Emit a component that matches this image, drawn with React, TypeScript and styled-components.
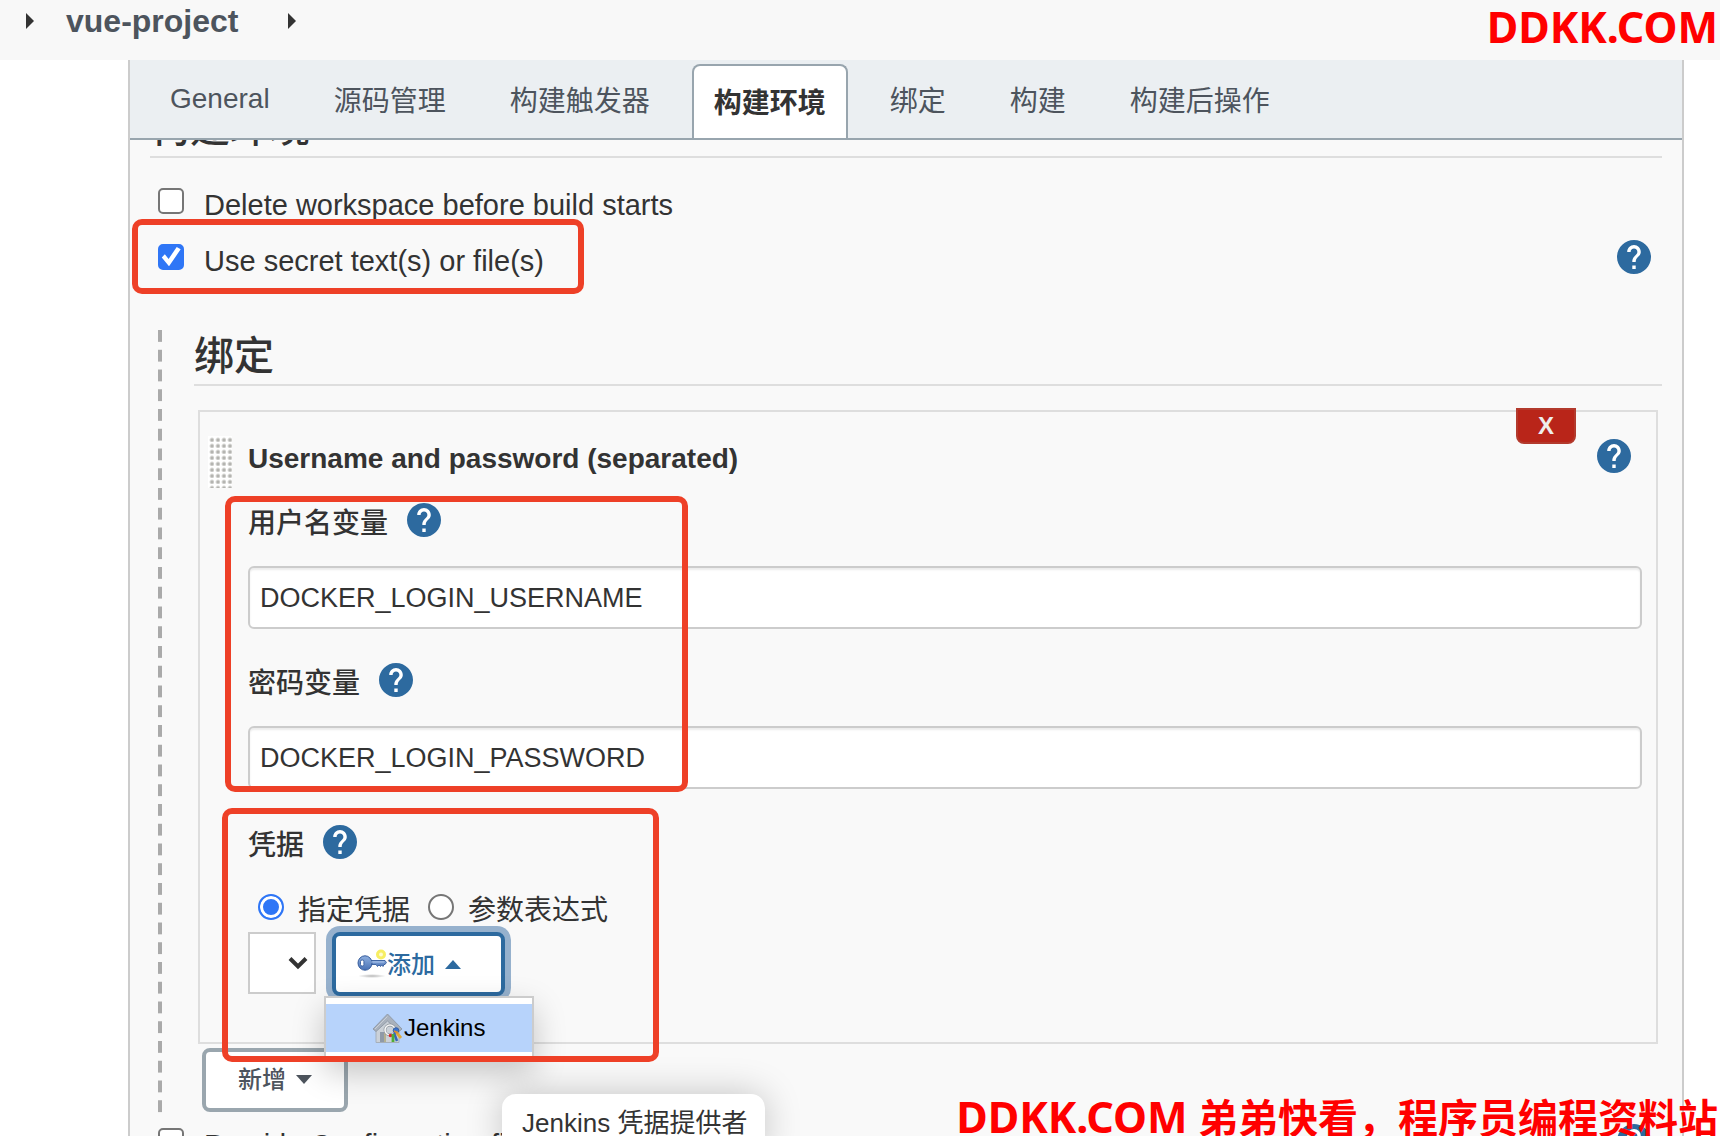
import React from "react";
import styled, { createGlobalStyle, css } from "styled-components";

const GlobalStyle = createGlobalStyle`
  *, *::before, *::after { box-sizing: border-box; }
  body {
    margin: 0;
    background: #fff;
    color: #333;
    font-family: "Liberation Sans", "Noto Sans CJK SC", sans-serif;
    font-size: 28px;
  }
  button, input, select { font-family: inherit; color: inherit; }
`;

const Page = styled.div`
  position: relative;
  height: 100vh;
  overflow: hidden;
`;

const Breadcrumbs = styled.nav`
  display: flex;
  align-items: center;
  height: 60px;
  padding: 0 26px 18px;
  background: #f8f8f8;
`;

const Crumb = styled.a`
  margin: 0 50px 0 32px;
  color: #4d545d;
  font-size: 32px;
  font-weight: 700;
  text-decoration: none;
`;

const Panel = styled.main`
  margin: 0 36px 0 128px;
  border: solid #ccc;
  border-width: 0 2px;
  background: #f9f9f9;
`;

const TabBar = styled.div`
  position: relative;
  z-index: 1;
  display: flex;
  gap: 20px;
  height: 80px;
  padding: 4px 18px 0;
  border-bottom: 2px solid #98a5ae;
  background: #ebeff2;
`;

const Tab = styled.button<{ $active?: boolean }>`
  padding: 0 20px 6px;
  border: 2px solid transparent;
  border-bottom: 0;
  border-radius: 8px 8px 0 0;
  background: none;
  color: #4d545d;
  font-size: 28px;
  white-space: nowrap;
  ${(p) =>
    p.$active &&
    css`
      padding-bottom: 2px;
      border-color: #98a5ae;
      background: #fff;
      color: #333;
      font-weight: 700;
    `}
`;

const Content = styled.form`
  padding: 0 20px;
`;

const SectionTitle = styled.h2<{ $tucked?: boolean }>`
  height: 60px;
  margin: ${(p) => (p.$tucked ? "-42px 0 15px" : "0")};
  padding: 6px 0 4px;
  border-bottom: 2px solid #dedede;
  font-size: 40px;
  font-weight: 500;
  line-height: 48px;
`;

const OptionRow = styled.div`
  position: relative;
  display: flex;
  align-items: center;
  justify-content: space-between;
  height: 56px;
  padding: 0 11px 0 8px;
`;

const Option = styled.label`
  display: flex;
  align-items: center;
  gap: 20px;
  font-size: 29px;
`;

const OptionText = styled.span`
  padding-top: 8px;
`;

const Tick = styled.input`
  flex: none;
  width: 26px;
  height: 26px;
  margin: 0;
  border: 2px solid #767676;
  border-radius: 5px;
  background: #fff;
  appearance: none;

  &:checked {
    border-color: #2f76f6;
    background: #2f76f6;
  }

  &:checked::after {
    content: "";
    display: block;
    height: 22px;
    background: #fff;
    clip-path: polygon(8% 52%, 22% 38%, 39% 59%, 76% 5%, 94% 15%, 41% 92%);
  }
`;

const Radio = styled.input`
  flex: none;
  width: 26px;
  height: 26px;
  margin: 0;
  border: 2px solid #767676;
  border-radius: 50%;
  background: #fff;
  appearance: none;

  &:checked {
    border-color: #2f76f6;
    background: #2f76f6;
    box-shadow: inset 0 0 0 3px #fff;
  }
`;

const HelpButton = styled.button`
  display: block;
  flex: none;
  width: 34px;
  height: 34px;
  padding: 0;
  border: 0;
  border-radius: 50%;
  background: none;
`;

const Nested = styled.section`
  position: relative;
  margin: 41px 0 1px 8px;
  padding-left: 36px;

  &::before {
    content: "";
    position: absolute;
    top: 4px;
    bottom: -8px;
    left: 0;
    width: 4px;
    background: linear-gradient(#aaa 60%, transparent 60%) 0 0 / 4px 20px round;
  }
`;

const Card = styled.div`
  position: relative;
  margin: 24px 4px 4px;
  padding: 24px 14px 46px 48px;
  border: 2px solid #dedede;
`;

const CardHeader = styled.div`
  display: flex;
  align-items: flex-start;
  gap: 16px;
  margin: 0 11px 15px -40px;
`;

const DragHandle = styled.div`
  width: 24px;
  height: 52px;
  background: #fff radial-gradient(circle at 4px 4px, #b4b4b0 1px, #dededc 2px, #fff 3px) 0 0 / 6px 6px;
`;

const CardTitle = styled.h3`
  flex: 1;
  margin: 0;
  font-size: 28px;
  font-weight: 700;
  line-height: 46px;
`;

const HelpSlot = styled.div`
  padding-top: 3px;
`;

const RemoveButton = styled.button`
  position: absolute;
  top: -4px;
  right: 80px;
  width: 60px;
  height: 36px;
  padding: 0;
  border: 2px solid #b33a2d;
  border-radius: 0 0 8px 8px;
  background: #b92519;
  color: #eee;
  font-size: 24px;
  font-weight: 700;
  line-height: 32px;
`;

const Group = styled.div`
  position: relative;
`;

const LabelRow = styled.div`
  display: flex;
  align-items: center;
  gap: 19px;
`;

const FieldLabel = styled.label`
  padding-top: 8px;
  font-weight: 500;
  line-height: 26px;
`;

const Field = styled.div`
  padding-bottom: 34px;
`;

const TextBox = styled.input`
  display: block;
  width: 100%;
  height: 63px;
  margin-top: 29px;
  padding: 2px 10px 0;
  border: 2px solid #ccc;
  border-radius: 6px;
  background: #fff;
  box-shadow: inset 0 2px 2px rgba(0, 0, 0, 0.08);
  font-size: 27px;
`;

const CredentialLabelRow = styled(LabelRow)`
  padding-top: 2px;
`;

const RadioRow = styled.div`
  display: flex;
  align-items: center;
  gap: 18px;
  height: 32px;
  margin: 32px 0 9px;
  padding-left: 10px;
`;

const RadioOption = styled.label`
  display: flex;
  align-items: center;
  gap: 14px;
  line-height: 28px;
`;

const Controls = styled.div`
  display: flex;
  align-items: flex-start;
  gap: 16px;
`;

const SelectBox = styled.div`
  position: relative;
  width: 68px;
  height: 62px;

  select {
    width: 100%;
    height: 100%;
    border: 2px solid #ccc;
    border-radius: 0;
    background: #fff;
    appearance: none;
  }

  svg {
    position: absolute;
    top: 24px;
    right: 8px;
    pointer-events: none;
  }
`;

const MenuAnchor = styled.div`
  position: relative;
`;

const MenuButton = styled.button<{ $open?: boolean }>`
  display: flex;
  align-items: center;
  gap: 10px;
  height: 64px;
  padding: ${(p) => (p.$open ? "0 40px 0 21px" : "0 32px 2px")};
  border: 4px solid ${(p) => (p.$open ? "#2d6a9f" : "#9aa6ae")};
  border-radius: 8px;
  background: #fff;
  box-shadow: ${(p) => (p.$open ? "0 0 0 6px #96b1cd" : "none")};
  color: ${(p) => (p.$open ? "#2d6a9f" : "#4d545d")};
  font-size: 24px;
  font-weight: 500;
`;

const AddButton = styled(MenuButton)`
  margin-left: 8px;
`;

const IconText = styled.span`
  display: flex;
  align-items: center;
`;

const ButtonText = styled.span`
  padding-bottom: 4px;
`;

const Menu = styled.div`
  position: absolute;
  z-index: 2;
  top: 64px;
  left: -8px;
  width: 210px;
  padding: 6px 0;
  border: 2px solid #ccc;
  background: #fff;
  box-shadow: 0 12px 32px rgba(0, 0, 0, 0.22);
`;

const MenuItem = styled.button`
  display: flex;
  align-items: center;
  gap: 1px;
  width: 100%;
  height: 48px;
  padding: 0 0 0 46px;
  border: 0;
  background: #b7d3fb;
  color: #000;
  font-size: 24px;
`;

const Tooltip = styled.div`
  position: absolute;
  z-index: 2;
  top: 162px;
  left: 170px;
  padding: 13px 18px 13px 20px;
  border-radius: 14px;
  background: #fff;
  box-shadow: 0 0 36px rgba(0, 0, 0, 0.22);
  font-size: 26px;
  line-height: 32px;
  white-space: nowrap;
`;

const Highlight = styled.div<{ $top: number; $left: number; $width: number; $height: number }>`
  position: absolute;
  z-index: 3;
  top: ${(p) => p.$top}px;
  left: ${(p) => p.$left}px;
  width: ${(p) => p.$width}px;
  height: ${(p) => p.$height}px;
  border: 6px solid #ee4027;
  border-radius: 10px;
  pointer-events: none;
`;

const Watermark = styled.div<{ $bottom?: boolean }>`
  position: absolute;
  z-index: 4;
  right: 2px;
  ${(p) => (p.$bottom ? "bottom: -10px;" : "top: -1px;")}
  color: #f00;
  font-family: "Noto Sans", "Noto Sans CJK SC", sans-serif;
  font-size: 40px;
  font-weight: 700;
  line-height: 56px;
  white-space: nowrap;
`;

const Brand = styled.span`
  font-size: 43px;
`;

const CrumbArrow = () => (
  <svg width="8" height="16" viewBox="0 0 8 16" aria-hidden="true">
    <path d="M0 0L8 8L0 16Z" fill="#333" />
  </svg>
);

const Help = ({ label }: { label: string }) => (
  <HelpButton type="button" aria-label={label}>
    <svg width="34" height="34" viewBox="2 2 20 20" aria-hidden="true">
      <circle cx="12" cy="12" r="9" fill="#fff" />
      <path
        fill="#2d6a9f"
        d="M12 2C6.48 2 2 6.48 2 12s4.48 10 10 10 10-4.48 10-10S17.52 2 12 2zm1 17h-2v-2h2v2zm2.07-7.75l-.9.92C13.45 12.9 13 13.5 13 15h-2v-.5c0-1.1.45-2.1 1.17-2.83l1.24-1.26c.37-.36.59-.86.59-1.41 0-1.1-.9-2-2-2s-2 .9-2 2H8c0-2.21 1.79-4 4-4s4 1.79 4 4c0 .88-.36 1.68-.93 2.25z"
      />
    </svg>
  </HelpButton>
);

const Caret = ({ up }: { up?: boolean }) => (
  <svg width="16" height="9" viewBox="0 0 16 9" aria-hidden="true">
    <path d={up ? "M0 9L8 0L16 9Z" : "M0 0L16 0L8 9Z"} fill="currentColor" />
  </svg>
);

const KeyIcon = () => (
  <svg width="30" height="30" viewBox="0 0 30 30" aria-hidden="true">
    <defs>
      <linearGradient id="keyMetal" x1="0" y1="0" x2="0" y2="1">
        <stop offset="0" stopColor="#8fb0e0" />
        <stop offset="1" stopColor="#4770b4" />
      </linearGradient>
      <radialGradient id="keyShadow">
        <stop offset="0" stopColor="#000" stopOpacity=".28" />
        <stop offset="1" stopColor="#000" stopOpacity="0" />
      </radialGradient>
    </defs>
    <ellipse cx="15" cy="27" rx="14" ry="2" fill="url(#keyShadow)" />
    <circle cx="24" cy="5.500" r="3.500" fill="#fffbd0" stroke="#f7ee62" strokeWidth="3" />
    <path
      d="M13 11.500H28L29.400 13.500L28 15.500H27L26 17.500L24.600 16L23.500 17.500L22 16L20.500 17.500L19 15.500H13Z"
      fill="url(#keyMetal)"
      stroke="#345b9c"
      strokeWidth=".9"
    />
    <ellipse cx="8" cy="14" rx="7" ry="7.200" fill="url(#keyMetal)" stroke="#345b9c" />
    <rect x="3.500" y="11" width="3.400" height="6" rx="1.500" fill="#fff" stroke="#345b9c" strokeWidth=".9" />
    <path d="M14 13H27" stroke="#b4cbee" strokeWidth=".8" />
  </svg>
);

const HouseIcon = () => (
  <svg width="31" height="31" viewBox="0 0 31 31" aria-hidden="true">
    <path d="M4 15L15 4L27 15V29.500H4Z" fill="#cbd1d8" stroke="#a6afb9" />
    <path d="M8 19H14V29H8Z" fill="#8f9aa8" />
    <path d="M13 20V29" stroke="#d9c87a" strokeWidth="1" />
    <path d="M1 16L15.500 1L30 16L27 18.500L15.500 8L4 18.500Z" fill="#a9b1bc" stroke="#8d97a4" strokeWidth=".9" />
    <path d="M3 16L15.500 3.500" stroke="#c9cfd7" strokeWidth="1" />
    <circle cx="18" cy="17" r="5" fill="none" stroke="#8e959d" strokeWidth="2.800" />
    <circle cx="18" cy="17" r="5" fill="none" stroke="#f4f5f6" strokeWidth="1.600" />
    <circle cx="18.500" cy="22.500" r="1.800" fill="#d92a2a" />
    <circle cx="24" cy="17.500" r="2.800" fill="#3f74c9" stroke="#28559f" strokeWidth=".8" />
    <path d="M24 19L29 25" stroke="#dda93a" strokeWidth="2.800" />
    <path d="M22 20L25 28" stroke="#3566ba" strokeWidth="2.600" />
    <path d="M21 21V29" stroke="#4fae35" strokeWidth="2.800" />
    <path d="M22 18L26 20" stroke="#e28b2b" strokeWidth="1.500" />
  </svg>
);

const tabs = ["General", "源码管理", "构建触发器", "构建环境", "绑定", "构建", "构建后操作"];

const CheckOption = ({ id, text, checked, help }: { id: string; text: string; checked?: boolean; help?: boolean }) => (
  <>
    <Option htmlFor={id}>
      <Tick id={id} type="checkbox" defaultChecked={checked} />
      <OptionText>{text}</OptionText>
    </Option>
    {help && <Help label={text} />}
  </>
);

const VariableField = ({ id, label, value }: { id: string; label: string; value: string }) => (
  <Field>
    <LabelRow>
      <FieldLabel htmlFor={id}>{label}</FieldLabel>
      <Help label={label} />
    </LabelRow>
    <TextBox id={id} type="text" defaultValue={value} />
  </Field>
);

export default function App() {
  return (
    <Page lang="zh-CN">
      <GlobalStyle />
      <Breadcrumbs>
        <CrumbArrow />
        <Crumb href="#project">vue-project</Crumb>
        <CrumbArrow />
      </Breadcrumbs>

      <Panel>
        <TabBar role="tablist">
          {tabs.map((name) => (
            <Tab key={name} type="button" role="tab" aria-selected={name === "构建环境"} $active={name === "构建环境"}>
              {name}
            </Tab>
          ))}
        </TabBar>

        <Content>
          <SectionTitle $tucked>构建环境</SectionTitle>
          <OptionRow>
            <CheckOption id="clean" text="Delete workspace before build starts" />
          </OptionRow>
          <OptionRow>
            <CheckOption id="secret" text="Use secret text(s) or file(s)" checked help />
            <Highlight $top={-10} $left={-18} $width={452} $height={75} />
          </OptionRow>

          <Nested>
            <SectionTitle>绑定</SectionTitle>
            <Card>
              <RemoveButton type="button">X</RemoveButton>
              <CardHeader>
                <DragHandle />
                <CardTitle>Username and password (separated)</CardTitle>
                <HelpSlot>
                  <Help label="Username and password" />
                </HelpSlot>
              </CardHeader>

              <Group>
                <VariableField id="username" label="用户名变量" value="DOCKER_LOGIN_USERNAME" />
                <VariableField id="password" label="密码变量" value="DOCKER_LOGIN_PASSWORD" />
                <Highlight $top={-7} $left={-23} $width={463} $height={296} />
              </Group>

              <Group>
                <CredentialLabelRow>
                  <FieldLabel htmlFor="credential">凭据</FieldLabel>
                  <Help label="凭据" />
                </CredentialLabelRow>
                <RadioRow>
                  <RadioOption>
                    <Radio type="radio" name="kind" defaultChecked />
                    <OptionText>指定凭据</OptionText>
                  </RadioOption>
                  <RadioOption>
                    <Radio type="radio" name="kind" />
                    <OptionText>参数表达式</OptionText>
                  </RadioOption>
                </RadioRow>
                <Controls>
                  <SelectBox>
                    <select id="credential">
                      <option value="" />
                    </select>
                    <svg width="20" height="14" viewBox="0 0 20 14" aria-hidden="true">
                      <path d="M2 2.500L10 10.500L18 2.500" fill="none" stroke="#333" strokeWidth="4" />
                    </svg>
                  </SelectBox>
                  <MenuAnchor>
                    <MenuButton type="button" $open aria-expanded="true">
                      <IconText>
                        <KeyIcon />
                        <ButtonText>添加</ButtonText>
                      </IconText>
                      <Caret up />
                    </MenuButton>
                    <Menu role="menu">
                      <MenuItem type="button" role="menuitem">
                        <HouseIcon />
                        Jenkins
                      </MenuItem>
                    </Menu>
                    <Tooltip role="tooltip">Jenkins 凭据提供者</Tooltip>
                  </MenuAnchor>
                </Controls>
                <Highlight $top={-15} $left={-26} $width={437} $height={254} />
              </Group>
            </Card>
            <AddButton type="button">
              <ButtonText>新增</ButtonText>
              <Caret />
            </AddButton>
          </Nested>

          <OptionRow>
            <CheckOption id="provide" text="Provide Configuration files" help />
          </OptionRow>
        </Content>
      </Panel>

      <Watermark>
        <Brand>DDKK.COM</Brand>
      </Watermark>
      <Watermark $bottom>
        <Brand>DDKK.COM</Brand> 弟弟快看，程序员编程资料站
      </Watermark>
    </Page>
  );
}
